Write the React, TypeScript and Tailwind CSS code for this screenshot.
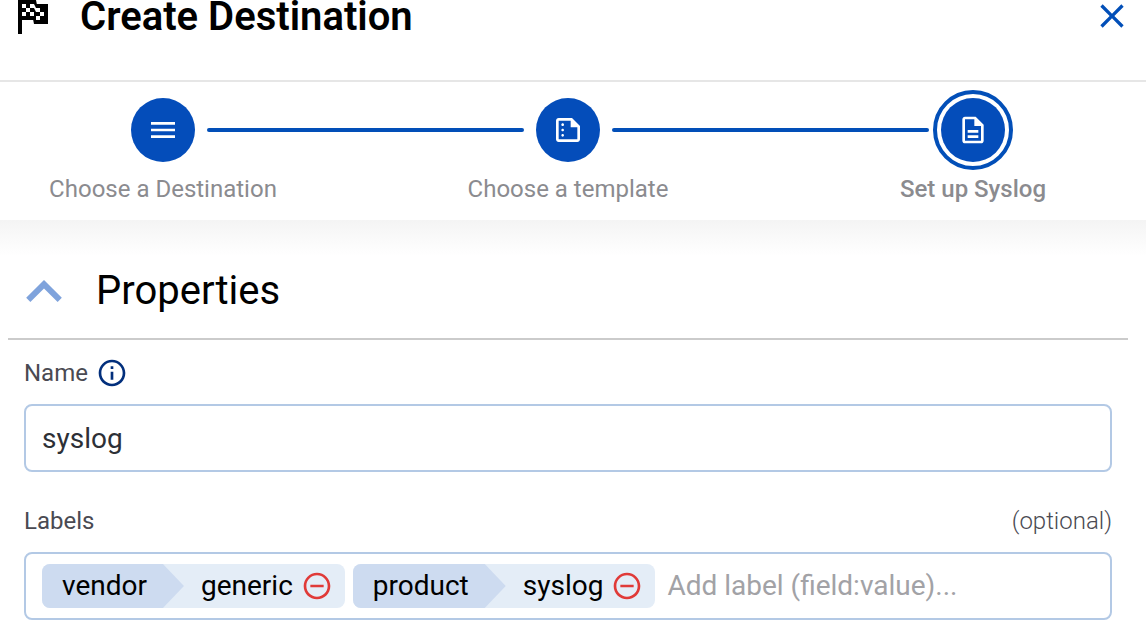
import React, { useState } from 'react';
import {
  MdClose,
  MdInfoOutline,
  MdMenu,
  MdOutlineDescription,
  MdOutlineSummarize,
  MdRemoveCircleOutline,
} from 'react-icons/md';
import type { IconType } from 'react-icons';

type Label = { field: string; value: string };

const steps: { title: string; icon: IconType }[] = [
  { title: 'Choose a Destination', icon: MdMenu },
  { title: 'Choose a template', icon: MdOutlineSummarize },
  { title: 'Set up Syslog', icon: MdOutlineDescription },
];

const FlagIcon: React.FC = () => (
  <svg
    viewBox="5 4 15 17"
    className="h-[34px] w-[30px]"
    fill="currentColor"
    fillRule="evenodd"
    aria-hidden="true"
  >
    <path d="M5 4h9l.4 2H20v10h-7l-.4-2H7v7H5V4zM7 6v2h2V6H7zM11 6v2h2l1 2V8l-1-2h-2zM9 8v2h2V8H9zM7 10v2h2v-2H7zM11 10v2h2v-2h-2zM14 8v2h2V8h-2zM16 10v2h2v-2h-2zM14 12v2h2v-2h-2z" />
  </svg>
);

const ChevronUpIcon: React.FC = () => (
  <svg viewBox="6 8 12 7.41" className="h-[22px] w-9" fill="currentColor" aria-hidden="true">
    <path d="M7.41 15.41 12 10.83l4.59 4.58L18 14l-6-6-6 6 1.41 1.41z" />
  </svg>
);

const Stepper: React.FC<{ current: number }> = ({ current }) => (
  <ol className="flex pt-4 pr-[141px] pb-4 pl-[131px]">
    {steps.map(({ title, icon: Icon }, index) => (
      <React.Fragment key={title}>
        {index > 0 && (
          <li aria-hidden="true" className="mx-3 mt-[30px] h-1 flex-1 rounded-full bg-[#024fb8]" />
        )}
        <li
          className="flex w-16 shrink-0 flex-col items-center"
          aria-current={index === current ? 'step' : undefined}
        >
          <div
            className={
              index === current
                ? 'flex size-16 items-center justify-center rounded-full bg-[#044dba] text-white ring-4 ring-white outline-4 outline-offset-4 outline-[#024fb8]'
                : 'flex size-16 items-center justify-center rounded-full bg-[#044dba] text-white'
            }
          >
            <Icon className="size-8" />
          </div>
          <span
            className={
              index === current
                ? 'mt-3 text-2xl leading-[30px] font-medium whitespace-nowrap text-[#8b8b8f]'
                : 'mt-3 text-2xl leading-[30px] whitespace-nowrap text-[#8b8b8f]'
            }
          >
            {title}
          </span>
        </li>
      </React.Fragment>
    ))}
  </ol>
);

const LabelTag: React.FC<{ label: Label; onRemove: () => void }> = ({ label, onRemove }) => (
  <div className="flex h-11 items-center overflow-hidden rounded-lg bg-[#e4edf7] pr-3 text-[28px] text-black">
    <span className="flex h-full items-center bg-[#cddbf0] pr-[37px] pl-5 [clip-path:polygon(0_0,calc(100%-21px)_0,100%_50%,calc(100%-21px)_100%,0_100%)]">
      {label.field}
    </span>
    <span className="pl-[17px]">{label.value}</span>
    <button
      type="button"
      aria-label={`Remove ${label.field}`}
      className="ml-2 text-[#e03a38]"
      onClick={onRemove}
    >
      <MdRemoveCircleOutline className="size-8" />
    </button>
  </div>
);

const App: React.FC = () => {
  const [name, setName] = useState('syslog');
  const [open, setOpen] = useState(true);
  const [draft, setDraft] = useState('');
  const [labels, setLabels] = useState<Label[]>([
    { field: 'vendor', value: 'generic' },
    { field: 'product', value: 'syslog' },
  ]);

  const addLabel = (e: React.KeyboardEvent<HTMLInputElement>) => {
    const [field, value] = draft.split(':');
    if (e.key !== 'Enter' || !field || !value) return;
    setLabels([...labels, { field, value }]);
    setDraft('');
  };

  return (
    <div className="bg-white font-[Roboto,sans-serif] text-black">
      <header className="flex items-start justify-between border-b-2 border-[#e6e6e6] pr-[14px] pb-11 pl-[18px]">
        <div className="flex items-start gap-8">
          <FlagIcon />
          <h1 className="text-[40px] leading-[34px] font-semibold">Create Destination</h1>
        </div>
        <button type="button" aria-label="Close" className="-mt-1 text-[#024fb8]">
          <MdClose className="size-10" />
        </button>
      </header>

      <Stepper current={2} />

      <main className="bg-linear-to-b from-[#f4f4f4] to-white to-[36px] pt-[46px] pr-[18px] pl-2">
        <div className="flex items-center gap-[34px] border-b-2 border-[#cbcbcb] pb-[22px] pl-[18px]">
          <button
            type="button"
            aria-label="Toggle properties"
            aria-expanded={open}
            className="text-[#7fa3dc]"
            onClick={() => setOpen(!open)}
          >
            <ChevronUpIcon />
          </button>
          <h2 className="text-[40px] leading-[50px]">Properties</h2>
        </div>

        {open && (
          <form className="px-4 pt-4" onSubmit={(e) => e.preventDefault()}>
            <div className="flex items-center gap-2 text-2xl leading-[34px] text-[#4a4a52]">
              <label htmlFor="name">Name</label>
              <MdInfoOutline className="size-8 text-[#022f7c]" />
            </div>
            <input
              type="text"
              id="name"
              className="mt-[14px] block h-[68px] w-full rounded-lg border-2 border-[#b3c9e5] px-4 text-[28px] text-[#2d3036] outline-none"
              value={name}
              onChange={(e) => setName(e.target.value)}
            />

            <div className="mt-8 flex justify-between text-2xl leading-[34px] text-[#4a4a52]">
              <label htmlFor="labels">Labels</label>
              <span className="font-light">(optional)</span>
            </div>
            <div className="mt-[14px] flex h-[68px] items-center gap-2 rounded-lg border-2 border-[#b3c9e5] px-4">
              {labels.map((label) => (
                <LabelTag
                  key={label.field}
                  label={label}
                  onRemove={() => setLabels(labels.filter((l) => l !== label))}
                />
              ))}
              <input
                type="text"
                id="labels"
                placeholder="Add label (field:value)..."
                className="min-w-0 flex-1 pl-1 text-[28px] outline-none placeholder:text-[#a2a2a6]"
                value={draft}
                onChange={(e) => setDraft(e.target.value)}
                onKeyDown={addLabel}
              />
            </div>
          </form>
        )}
      </main>
    </div>
  );
};

export default App;
